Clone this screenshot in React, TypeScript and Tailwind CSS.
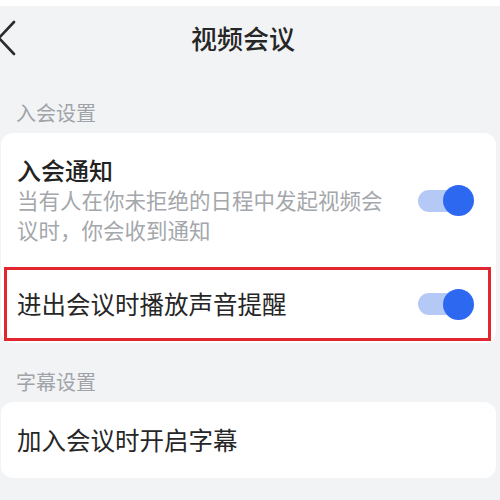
const font = { fontFamily: '"Noto Sans CJK SC", "Noto Sans", sans-serif' }

function Toggle() {
  return (
    <div className="relative flex h-[31px] w-[56px] shrink-0 items-center">
      <div className="h-[22px] w-[46px] rounded-full bg-[#b5c9f7]" />
      <div className="absolute right-0 top-0 h-[31px] w-[31px] rounded-full bg-[#2c69f0]" />
    </div>
  )
}

export default function App() {
  return (
    <div className="h-[500px] w-[500px] overflow-hidden bg-[#f2f3f5]" style={font}>
      <div className="h-[6px] bg-white" />

      <div className="relative flex h-[64px] items-center justify-center">
        <svg className="absolute left-[-3px] top-[14px]" width="20" height="36" viewBox="0 0 20 36" fill="none">
          <path d="M17 2 L2 18 L17 34" stroke="#2b2b2b" strokeWidth="2.6" strokeLinecap="round" strokeLinejoin="round" />
        </svg>
        <h1 className="ml-[-14px] text-[26px] leading-[32px] font-medium text-[#262626]">视频会议</h1>
      </div>

      <div className="flex h-[63px] items-end px-4 pb-[8px]">
        <span className="text-[20px] leading-[24px] text-[#a0a3a8]">入会设置</span>
      </div>

      <div className="ml-[1px] mr-[4px] rounded-[12px] bg-white">
        <div className="flex items-center justify-between pl-4 pr-[22px] pt-[23px] pb-[20px]">
          <div className="w-[380px]">
            <div className="text-[24px] leading-[28px] font-medium text-[#222]">入会通知</div>
            <div className="mt-[1px] text-[21.5px] leading-[30px] text-[#a4a7ab]">
              当有人在你未拒绝的日程中发起视频会议时，你会收到通知
            </div>
          </div>
          <Toggle />
        </div>
        <div className="relative flex h-[78px] items-center justify-between pl-4 pr-[22px]">
          <span className="text-[24.5px] leading-[30px] text-[#262626]">进出会议时播放声音提醒</span>
          <Toggle />
          <div className="absolute left-[3px] right-[5px] top-[2px] bottom-[2px] border-[3px] border-[#e2262f]" />
        </div>
      </div>

      <div className="flex h-[59px] items-end px-4 pb-[8px]">
        <span className="text-[20px] leading-[24px] text-[#a0a3a8]">字幕设置</span>
      </div>

      <div className="ml-[1px] mr-[4px] flex h-[76px] items-center rounded-[12px] bg-white px-4">
        <span className="text-[24.5px] leading-[30px] text-[#262626]">加入会议时开启字幕</span>
      </div>
    </div>
  )
}
